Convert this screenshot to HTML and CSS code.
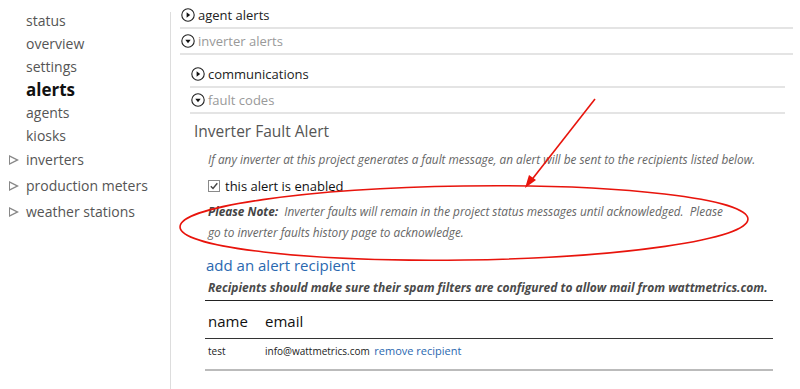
FILE: index.html
```html
<!DOCTYPE html>
<html lang="en">
<head>
<meta charset="UTF-8">
<title>alerts</title>
<link rel="stylesheet" href="styles.css">
</head>
<body>

<aside class="sidebar">
    <ul class="nav">
        <li>status</li>
        <li>overview</li>
        <li>settings</li>
        <li class="active">alerts</li>
        <li>agents</li>
        <li>kiosks</li>
        <li class="group">inverters</li>
        <li class="group">production meters</li>
        <li class="group">weather stations</li>
    </ul>
</aside>

<main class="content">
    <div class="acc-row">
        <svg class="acc-icon" viewBox="0 0 14 14"><circle cx="7" cy="7" r="6.2" fill="none" stroke="#222" stroke-width="1.1"/><path d="M5.6 4.3 L9.2 7 L5.6 9.7 Z" fill="#111"/></svg>
        <span>agent alerts</span>
    </div>
    <div class="acc-row open">
        <svg class="acc-icon" viewBox="0 0 14 14"><circle cx="7" cy="7" r="6.2" fill="none" stroke="#222" stroke-width="1.1"/><path d="M4.3 5.8 L9.7 5.8 L7 9.2 Z" fill="#111"/></svg>
        <span>inverter alerts</span>
    </div>

    <section class="nested">
        <div class="acc-row">
            <svg class="acc-icon" viewBox="0 0 14 14"><circle cx="7" cy="7" r="6.2" fill="none" stroke="#222" stroke-width="1.1"/><path d="M5.6 4.3 L9.2 7 L5.6 9.7 Z" fill="#111"/></svg>
            <span>communications</span>
        </div>
        <div class="acc-row open">
            <svg class="acc-icon" viewBox="0 0 14 14"><circle cx="7" cy="7" r="6.2" fill="none" stroke="#222" stroke-width="1.1"/><path d="M4.3 5.8 L9.7 5.8 L7 9.2 Z" fill="#111"/></svg>
            <span>fault codes</span>
        </div>

        <div class="alert-panel">
            <h2>Inverter Fault Alert</h2>
            <div class="alert-body">
                <p class="desc">If any inverter at this project generates a fault message, an alert will be sent to the recipients listed below.</p>
                <label class="enabled">
                    <svg class="check" viewBox="0 0 12 12"><rect x="0.5" y="0.5" width="11" height="11" fill="#fff" stroke="#8a8a8a"/><path d="M2.8 6.2 L5 8.5 L9.3 3.2" fill="none" stroke="#444" stroke-width="1.4"/></svg>
                    this alert is enabled
                </label>
                <p class="note"><b>Please Note:</b>&nbsp; Inverter faults will remain in the project status messages until acknowledged.&nbsp; Please go to inverter faults history page to acknowledge.</p>
            </div>
            <a class="add-link">add an alert recipient</a>
            <p class="spam">Recipients should make sure their spam filters are configured to allow mail from wattmetrics.com.</p>

            <table class="recipients">
                <thead>
                    <tr><th>name</th><th>email</th></tr>
                </thead>
                <tbody>
                    <tr><td>test</td><td>info@wattmetrics.com <a class="remove">remove recipient</a></td></tr>
                </tbody>
            </table>
        </div>
    </section>
</main>

<!-- 注釈（赤い丸と矢印） -->
<svg class="markup" width="800" height="389" viewBox="0 0 800 389">
    <ellipse cx="464" cy="223" rx="284" ry="37" fill="none" stroke="#e8140c" stroke-width="1.6" transform="rotate(-0.8 464 223)"/>
    <line x1="595" y1="99" x2="530" y2="182" stroke="#e8140c" stroke-width="1.6"/>
    <path d="M525 188 L529 175 L536 180 Z" fill="#e8140c"/>
</svg>

</body>
</html>
```

FILE: styles.css
```css
/* 全体 */
body {
    font-family: "Open Sans", "Noto Sans", sans-serif;
    color: #333;
    background: #fff;
    margin: 0;
    display: flex;
    min-height: 389px;
}

/* サイドバー */
.sidebar {
    width: 170px;
    flex-shrink: 0;
}
.nav {
    list-style: none;
    margin: 0;
    padding: 9px 0 0 26px;
}
.nav li {
    font-size: 14px;
    line-height: 23px;
    color: #555;
    position: relative;
}
.nav li.active {
    font-size: 17px;
    font-weight: bold;
    color: #111;
}
.nav li.group {
    line-height: 26px;
}
.nav li.group::before {
    content: "";
    position: absolute;
    left: -17px;
    top: 8px;
    border-left: 10px solid #888;
    border-top: 5px solid transparent;
    border-bottom: 5px solid transparent;
}
.nav li.group::after {
    content: "";
    position: absolute;
    left: -16px;
    top: 10px;
    border-left: 6px solid #fff;
    border-top: 3px solid transparent;
    border-bottom: 3px solid transparent;
}

/* メイン */
.content {
    flex: 1;
    border-left: 1px solid #ddd;
    margin-top: 12px;
    padding: 0 7px 0 9px;
}
.content > .acc-row:first-child {
    margin-top: -9px;
}

.acc-row {
    display: flex;
    align-items: center;
    gap: 3px;
    height: 24px;
    border-bottom: 2px solid #e4e4e4;
    font-size: 13px;
    color: #222;
}
.acc-row.open {
    color: #999;
}
.acc-icon {
    width: 14px;
    height: 14px;
    margin-left: 1px;
}

.nested {
    margin: 7px 8px 0 10px;
}

/* アラートパネル */
.alert-panel {
    padding: 0 8px 0 4px;
}
.alert-panel h2 {
    font-size: 15.5px;
    font-weight: normal;
    color: #555;
    margin: 6px 0 0;
}
.alert-body {
    padding-left: 14px;
}
.desc {
    font-style: italic;
    font-size: 11.8px;
    color: #666;
    margin: 9px 0 0;
}
.enabled {
    display: flex;
    align-items: center;
    gap: 5px;
    font-size: 13px;
    color: #111;
    margin-top: 10px;
}
.check {
    width: 12px;
    height: 12px;
}
.note {
    font-style: italic;
    font-size: 11.8px;
    color: #666;
    line-height: 21px;
    margin: 6px 0 0;
    max-width: 530px;
}
.note b {
    color: #444;
}

.add-link {
    display: block;
    color: #2a68b0;
    font-size: 15px;
    margin: 12px 0 0 12px;
}
.spam {
    font-style: italic;
    font-weight: bold;
    font-size: 12px;
    color: #4a4a4a;
    margin: 4px 0 0 14px;
}

/* 受信者テーブル */
.recipients {
    width: calc(100% - 15px);
    margin: 4px 0 0 11px;
    border-collapse: collapse;
    border-top: 1px solid #222;
    border-bottom: 2px solid #bbb;
}
.recipients th {
    font-size: 15px;
    font-weight: normal;
    color: #111;
    text-align: left;
    padding: 10px 0 7px 3px;
    border-bottom: 1px solid #333;
}
.recipients th:first-child {
    width: 54px;
}
.recipients td {
    font-size: 10px;
    color: #222;
    padding: 4px 0 11px 3px;
}
.remove {
    color: #2a68b0;
    font-size: 11px;
    margin-left: 2px;
}

/* 注釈 */
.markup {
    position: absolute;
    left: 0;
    top: 0;
    pointer-events: none;
}
```
